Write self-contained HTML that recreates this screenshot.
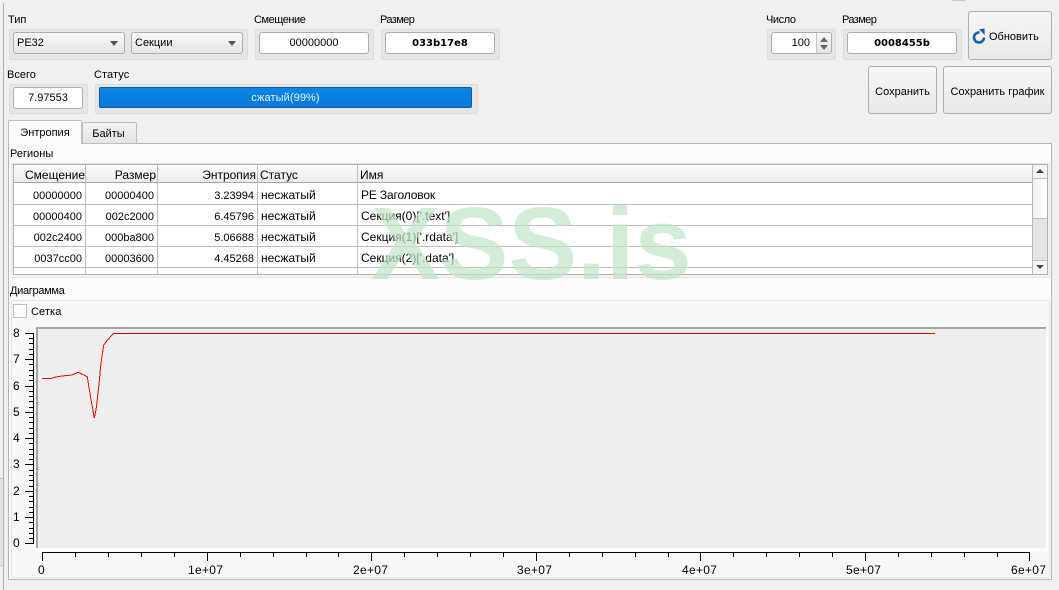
<!DOCTYPE html>
<html><head><meta charset="utf-8"><style>
html,body{margin:0;padding:0}
body{width:1059px;height:590px;overflow:hidden;background:#f0f0f0;position:relative;font:11px "Liberation Sans","DejaVu Sans",sans-serif;color:#000}
div,span{position:absolute;box-sizing:border-box}
.t{white-space:nowrap;line-height:14px;height:14px}
.g{background:#e6e6e6;border:1px solid #dcdcdc;border-radius:2px}
.i{background:#fff;border:1px solid #adadad;border-radius:3px;text-align:center;line-height:21px;height:22px}
.b{font:bold 10px/21px "DejaVu Sans",sans-serif}
.c{background:linear-gradient(#fafafa,#e6e6e6);border:1px solid #adadad;border-radius:3px;height:22px;line-height:21px;padding-left:3px}
.c:after{content:"";position:absolute;right:6px;top:8px;border:4px solid transparent;border-top:5px solid #555;border-bottom:0}
.btn{background:linear-gradient(#f6f6f6,#e9e9e9);border:1px solid #adadad;border-radius:3px;text-align:center}
.h{top:168px;font-size:12px}
.r{text-align:right;white-space:nowrap;line-height:14px;height:14px}
.z{font-size:12px}
.hl{left:14px;width:1019px;height:1px;background:#bdbdbd}
.vl{top:165px;height:109px;width:1px;background:#bdbdbd}
</style></head><body>

<div style="left:0;top:3px;width:4px;height:587px;border-right:1px solid #b0b0b0"></div>
<div style="left:0;top:478px;width:3px;height:88px;background:#e2e2e2;border-top:1px solid #c4c4c4;border-bottom:1px solid #c4c4c4"></div>
<div style="left:952px;top:0;width:13px;height:1px;background:#c8c8c8"></div>

<div class="t" style="left:8px;top:13px">Тип</div>
<div class="t" style="left:254px;top:13px;letter-spacing:-.45px">Смещение</div>
<div class="t" style="left:380px;top:13px;letter-spacing:-.6px">Размер</div>
<div class="t" style="left:766px;top:13px;letter-spacing:-.4px">Число</div>
<div class="t" style="left:842px;top:13px;letter-spacing:-.6px">Размер</div>
<div class="t" style="left:7px;top:68px">Всего</div>
<div class="t" style="left:94px;top:68px;letter-spacing:.1px">Статус</div>

<div class="g" style="left:9px;top:29px;width:239px;height:31px"></div>
<div class="c" style="left:13px;top:32px;width:112px">PE32</div>
<div class="c" style="left:131px;top:32px;width:112px">Секции</div>
<div class="g" style="left:255px;top:29px;width:119px;height:31px"></div>
<div class="i" style="left:259px;top:32px;width:110px">00000000</div>
<div class="g" style="left:381px;top:29px;width:119px;height:31px"></div>
<div class="i b" style="left:385px;top:32px;width:110px">033b17e8</div>

<div class="g" style="left:767px;top:29px;width:69px;height:31px"></div>
<div class="i" style="left:771px;top:32px;width:61px;text-align:right;padding-right:21px">100</div>
<div style="left:816px;top:33px;width:1px;height:20px;background:#c4c4c4"></div>
<div style="left:817px;top:33px;width:14px;height:20px;background:linear-gradient(#f8f8f8,#e4e4e4);border-radius:0 3px 3px 0"></div>
<div style="left:820px;top:37px;border:4px solid transparent;border-bottom:5px solid #666;border-top:0"></div>
<div style="left:820px;top:45px;border:4px solid transparent;border-top:5px solid #666;border-bottom:0"></div>
<div class="g" style="left:843px;top:29px;width:119px;height:31px"></div>
<div class="i b" style="left:847px;top:32px;width:110px">0008455b</div>

<div class="btn" style="left:968px;top:11px;width:84px;height:49px"></div>
<svg style="position:absolute;left:972px;top:27px" width="15" height="17" viewBox="0 0 15 17"><path d="M7.5 5.5A5 5 0 1 0 12 10.5" fill="none" stroke="#1d5f9e" stroke-width="2.6"/><path d="M7 2.2L12.6 1.5L12.6 8Z" fill="#1d5f9e"/></svg>
<div class="t" style="left:989px;top:30px">Обновить</div>
<div class="btn" style="left:868px;top:66px;width:69px;height:48px;line-height:50px">Сохранить</div>
<div class="btn" style="left:943px;top:66px;width:109px;height:48px;line-height:50px">Сохранить график</div>

<div class="g" style="left:9px;top:84px;width:79px;height:30px"></div>
<div class="i" style="left:13px;top:87px;width:70px">7.97553</div>
<div class="g" style="left:95px;top:84px;width:383px;height:30px"></div>
<div style="left:99px;top:87px;width:373px;height:21px;background:linear-gradient(#0b86e6,#0678d8);border:1px solid #0d5c9e;border-radius:2px;color:#e8f2fb;text-align:center;line-height:21px;letter-spacing:.1px">сжатый(99%)</div>

<div style="left:8px;top:143px;width:1044px;height:437px;background:#fbfbfb;border:1px solid #b5b5b5"></div>
<div style="left:82px;top:122px;width:55px;height:22px;background:linear-gradient(#f2f2f2,#e4e4e4);border:1px solid #bdbdbd;border-radius:2px 2px 0 0;text-align:center;line-height:23px;padding-right:2px">Байты</div>
<div style="left:8px;top:120px;width:74px;height:24px;background:#fbfbfb;border:1px solid #bdbdbd;border-bottom:0;border-radius:2px 2px 0 0;text-align:center;line-height:25px">Энтропия</div>

<div class="t" style="left:10px;top:147px">Регионы</div>
<div style="left:11px;top:163px;width:1039px;height:115px;background:#f4f4f4;border:1px solid #e4e4e4"></div>
<div style="left:13px;top:164px;width:1035px;height:111px;background:#fff;border:1px solid #b0b0b0"></div>
<div style="left:14px;top:165px;width:1019px;height:18px;background:linear-gradient(#fcfcfc,#ececec);border-bottom:1px solid #a8a8a8"></div>
<div class="hl" style="top:204px"></div><div class="hl" style="top:225px"></div><div class="hl" style="top:246px"></div><div class="hl" style="top:267px"></div>
<div class="vl" style="left:85px"></div><div class="vl" style="left:157px"></div><div class="vl" style="left:257px"></div><div class="vl" style="left:357px"></div>

<div class="r h" style="left:14px;width:71px">Смещение</div>
<div class="r h" style="left:86px;width:70px">Размер</div>
<div class="r h" style="left:158px;width:98px">Энтропия</div>
<div class="t h" style="left:260px">Статус</div>
<div class="t h" style="left:360px">Имя</div>

<div class="r" style="left:14px;width:68px;top:189px">00000000</div>
<div class="r" style="left:86px;width:68px;top:189px">00000400</div>
<div class="r" style="left:158px;width:96px;top:189px">3.23994</div>
<div class="t z" style="left:261px;top:188px">несжатый</div>
<div class="t z" style="left:361px;top:188px;letter-spacing:-.15px">PE Заголовок</div>

<div class="r" style="left:14px;width:68px;top:210px">00000400</div>
<div class="r" style="left:86px;width:68px;top:210px">002c2000</div>
<div class="r" style="left:158px;width:96px;top:210px">6.45796</div>
<div class="t z" style="left:261px;top:209px">несжатый</div>
<div class="t z" style="left:361px;top:209px">Секция(0)['.text']</div>

<div class="r" style="left:14px;width:68px;top:231px">002c2400</div>
<div class="r" style="left:86px;width:68px;top:231px">000ba800</div>
<div class="r" style="left:158px;width:96px;top:231px">5.06688</div>
<div class="t z" style="left:261px;top:230px">несжатый</div>
<div class="t z" style="left:361px;top:230px">Секция(1)['.rdata']</div>

<div class="r" style="left:14px;width:68px;top:252px">0037cc00</div>
<div class="r" style="left:86px;width:68px;top:252px">00003600</div>
<div class="r" style="left:158px;width:96px;top:252px">4.45268</div>
<div class="t z" style="left:261px;top:251px">несжатый</div>
<div class="t z" style="left:361px;top:251px">Секция(2)['.data']</div>

<div style="left:1032px;top:165px;width:15px;height:109px;background:#e4e4e4;border-left:1px solid #b8b8b8"></div>
<div style="left:1033px;top:165px;width:14px;height:14px;background:#f4f4f4;border-bottom:1px solid #bdbdbd"></div>
<div style="left:1033px;top:179px;width:14px;height:40px;background:linear-gradient(90deg,#f0f0f0,#fff);border-bottom:1px solid #bdbdbd"></div>
<div style="left:1033px;top:260px;width:14px;height:14px;background:#f4f4f4;border-top:1px solid #bdbdbd"></div>
<div style="left:1036px;top:169px;border:4px solid transparent;border-bottom:4px solid #444;border-top:0"></div>
<div style="left:1036px;top:265px;border:4px solid transparent;border-top:4px solid #444;border-bottom:0"></div>

<div class="t" style="left:10px;top:284px;letter-spacing:-.3px">Диаграмма</div>
<div style="left:11px;top:300px;width:1039px;height:278px;background:#f8f8f8;border:1px solid #e4e4e4;border-radius:2px"></div>
<div style="left:13px;top:304px;width:14px;height:14px;background:#fff;border:1px solid #bdbdbd"></div>
<div class="t" style="left:31px;top:305px;letter-spacing:.1px">Сетка</div>

<div style="left:36px;top:327px;width:1012px;height:224px;background:#fff"></div>
<div style="left:36px;top:327px;width:1010px;height:221px;background:#efefef;border-top:2px solid #a5a5a5;border-left:2px solid #a5a5a5"></div>

<svg style="position:absolute;left:0;top:320px" width="1059" height="270" viewBox="0 320 1059 270" shape-rendering="crispEdges">
<path d="M33.5 333V543.5" stroke="#000" fill="none"/>
<path d="M25 333.5h9M25 359.5h9M25 386.5h9M25 412.5h9M25 438.5h9M25 464.5h9M25 491.5h9M25 517.5h9M25 543.5h9" stroke="#000" fill="none"/>
<path d="M29 338.5h5M29 343.5h5M29 349.5h5M29 354.5h5M29 364.5h5M29 370.5h5M29 375.5h5M29 380.5h5M29 391.5h5M29 396.5h5M29 401.5h5M29 407.5h5M29 417.5h5M29 422.5h5M29 428.5h5M29 433.5h5M29 443.5h5M29 449.5h5M29 454.5h5M29 459.5h5M29 470.5h5M29 475.5h5M29 480.5h5M29 486.5h5M29 496.5h5M29 501.5h5M29 507.5h5M29 512.5h5M29 522.5h5M29 528.5h5M29 533.5h5M29 538.5h5" stroke="#000" fill="none"/>
<path d="M42 552.5H1030" stroke="#000" fill="none"/>
<path d="M42.5 552v9M207.5 552v9M371.5 552v9M536.5 552v9M700.5 552v9M865.5 552v9M1029.5 552v9" stroke="#000" fill="none"/>
<path d="M75.5 552v5M108.5 552v5M141.5 552v5M174.5 552v5M240.5 552v5M273.5 552v5M306.5 552v5M338.5 552v5M404.5 552v5M437.5 552v5M470.5 552v5M503.5 552v5M569.5 552v5M602.5 552v5M635.5 552v5M668.5 552v5M733.5 552v5M766.5 552v5M799.5 552v5M832.5 552v5M898.5 552v5M931.5 552v5M964.5 552v5M997.5 552v5" stroke="#000" fill="none"/>
<path d="M42 378.3L52 378.3L56 377L62 376L72 375L78 372.3L83 374.5L87.3 377L90.7 398L94.3 418L96 410L98.7 387L101 363L103.7 345L106.7 341L113.3 333.5H935" stroke="#f00" fill="none"/>
</svg>

<div class="t" style="left:13px;top:326px;font-size:12px">8</div>
<div class="t" style="left:13px;top:352px;font-size:12px">7</div>
<div class="t" style="left:13px;top:379px;font-size:12px">6</div>
<div class="t" style="left:13px;top:405px;font-size:12px">5</div>
<div class="t" style="left:13px;top:431px;font-size:12px">4</div>
<div class="t" style="left:13px;top:457px;font-size:12px">3</div>
<div class="t" style="left:13px;top:484px;font-size:12px">2</div>
<div class="t" style="left:13px;top:510px;font-size:12px">1</div>
<div class="t" style="left:13px;top:536px;font-size:12px">0</div>

<div class="t" style="left:38px;top:563px;font-size:12px">0</div>
<div class="t" style="left:188px;top:563px;font-size:12px;letter-spacing:.3px">1e+07</div>
<div class="t" style="left:353px;top:563px;font-size:12px;letter-spacing:.3px">2e+07</div>
<div class="t" style="left:517px;top:563px;font-size:12px;letter-spacing:.3px">3e+07</div>
<div class="t" style="left:682px;top:563px;font-size:12px;letter-spacing:.3px">4e+07</div>
<div class="t" style="left:846px;top:563px;font-size:12px;letter-spacing:.3px">5e+07</div>
<div class="t" style="left:1011px;top:563px;font-size:12px;letter-spacing:.3px">6e+07</div>

<div class="t" style="left:371px;top:186px;height:115px;font:bold 103px/115px 'Liberation Sans',sans-serif;color:#c0e4c8;opacity:.7">XSS.is</div>
</body></html>
